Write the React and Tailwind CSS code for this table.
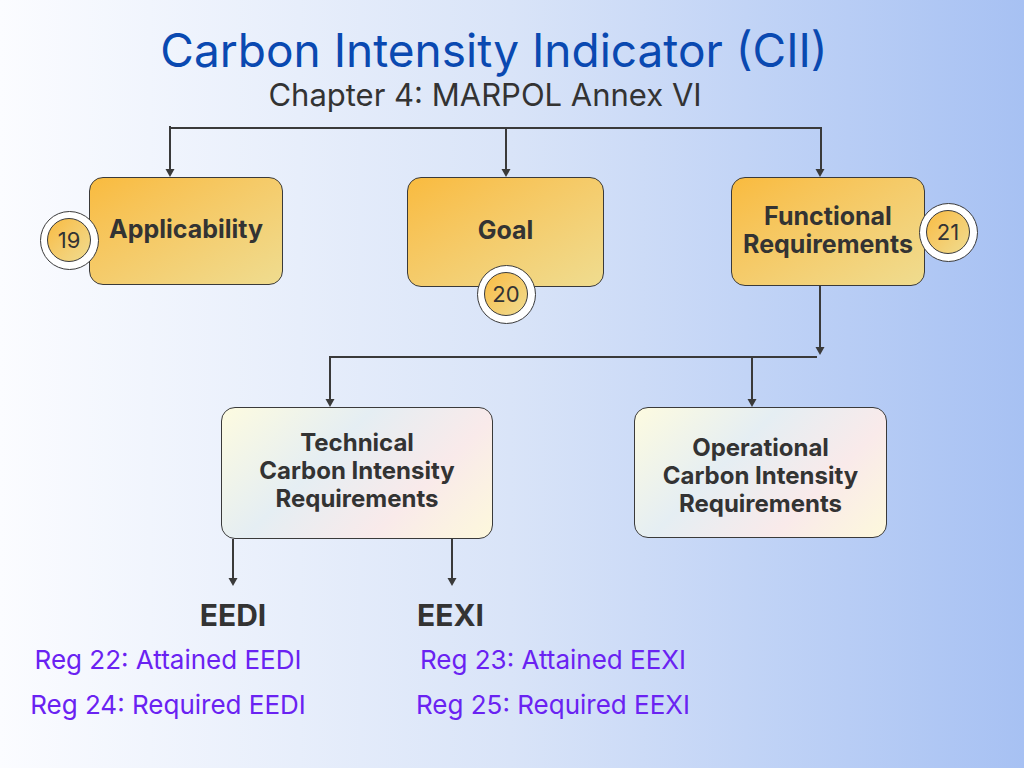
import React from "react";

/* ---------------- DIAGRAM DATA ---------------- */
const topBoxes = [
  { label: ["Applicability"], x: 89, y: 177, w: 194, h: 108 },
  { label: ["Goal"], x: 407, y: 177, w: 197, h: 110 },
  { label: ["Functional", "Requirements"], x: 731, y: 177, w: 194, h: 109 },
];

const badges = [
  { n: "19", cx: 69, cy: 240 },
  { n: "20", cx: 506, cy: 294 },
  { n: "21", cx: 948, cy: 232 },
];

const lightBoxes = [
  { label: ["Technical", "Carbon Intensity", "Requirements"], x: 221, y: 407, w: 272, h: 132, pt: "pb-[4px]" },
  { label: ["Operational", "Carbon Intensity", "Requirements"], x: 634, y: 407, w: 253, h: 131, pt: "pt-[6px]" },
];

const arrows = [
  [170, 177],
  [506, 177],
  [820, 177],
  [820, 355],
  [330, 407],
  [752, 407],
  [233, 586],
  [452, 586],
];

function Connectors() {
  return (
    <svg
      className="absolute inset-0 pointer-events-none"
      width="1024"
      height="768"
      viewBox="0 0 1024 768"
    >
      <g stroke="#3a3a3a" strokeWidth="2" fill="none">
        <path d="M170 126 V172 M170 128 H821 V172 M506 128 V172" />
        <path d="M820 286 V350 M330 357 H817 M330 356 V402 M752 357 V402" />
        <path d="M233 539 V581 M452 539 V581" />
      </g>
      <g fill="#3a3a3a">
        {arrows.map(([x, y]) => (
          <polygon key={`${x}-${y}`} points={`${x - 4.5},${y - 8} ${x + 4.5},${y - 8} ${x},${y}`} />
        ))}
      </g>
    </svg>
  );
}

function Badge({ n, cx, cy }) {
  return (
    <div
      className="absolute w-[59px] h-[59px] rounded-full bg-white border border-[#3a3a3a] flex items-center justify-center"
      style={{ left: cx - 29.5, top: cy - 29.5 }}
    >
      <div className="w-[44px] h-[44px] rounded-full border border-[#3a3a3a] bg-gradient-to-br from-[#f9bb3e] to-[#efdc8f] flex items-center justify-center text-[22px] text-[#333333] leading-none">
        {n}
      </div>
    </div>
  );
}

export default function App() {
  return (
    <div
      className="relative w-[1024px] h-[768px] overflow-hidden bg-gradient-to-r from-[#fbfcff] via-[#d9e4f8] to-[#a7c1f3]"
      style={{ fontFamily: "Inter, 'Noto Sans', sans-serif" }}
    >
      {/* HEADER */}
      <div className="pt-[24px] pr-[36px] h-[76px] text-center text-[46px] leading-[52px] text-[#0a49b1]">
        Carbon Intensity Indicator (CII)
      </div>
      <div className="pr-[54px] mt-[1px] text-center text-[31px] leading-[36px] text-[#333333]">
        Chapter 4: MARPOL Annex VI
      </div>

      <Connectors />

      {/* TOP ROW */}
      {topBoxes.map((b) => (
        <div
          key={b.label[0]}
          className="absolute rounded-[14px] border border-[#3a3a3a] bg-gradient-to-br from-[#f9bb3e] to-[#efdc8f] flex flex-col items-center justify-center pb-[4px] text-[25px] leading-[28px] font-bold text-[#333333]"
          style={{ left: b.x, top: b.y, width: b.w, height: b.h }}
        >
          {b.label.map((l) => (
            <span key={l}>{l}</span>
          ))}
        </div>
      ))}

      {badges.map((b) => (
        <Badge key={b.n} {...b} />
      ))}

      {/* SECOND ROW */}
      {lightBoxes.map((b) => (
        <div
          key={b.label[0]}
          className={`absolute rounded-[14px] border border-[#3a3a3a] bg-[linear-gradient(135deg,#fdfbe0_0%,#e5eef3_38%,#f9eaea_70%,#fdf8dc_100%)] flex flex-col items-center justify-center text-[24px] leading-[28px] font-bold text-[#333333] ${b.pt}`}
          style={{ left: b.x, top: b.y, width: b.w, height: b.h }}
        >
          {b.label.map((l) => (
            <span key={l}>{l}</span>
          ))}
        </div>
      ))}

      {/* REGULATIONS */}
      <div className="absolute left-[0px] top-[597px] w-[336px] flex flex-col items-center text-[#6a22f2]">
        <div className="pl-[130px] text-[30px] leading-[36px] font-bold text-[#333333]">EEDI</div>
        <div className="mt-[12px] text-[26px] leading-[30px]">Reg 22: Attained EEDI</div>
        <div className="mt-[15px] text-[26px] leading-[30px]">Reg 24: Required EEDI</div>
      </div>
      <div className="absolute left-[385px] top-[597px] w-[336px] flex flex-col items-center text-[#6a22f2]">
        <div className="pr-[205px] text-[30px] leading-[36px] font-bold text-[#333333]">EEXI</div>
        <div className="mt-[12px] text-[26px] leading-[30px]">Reg 23: Attained EEXI</div>
        <div className="mt-[15px] text-[26px] leading-[30px]">Reg 25: Required EEXI</div>
      </div>
    </div>
  );
}
